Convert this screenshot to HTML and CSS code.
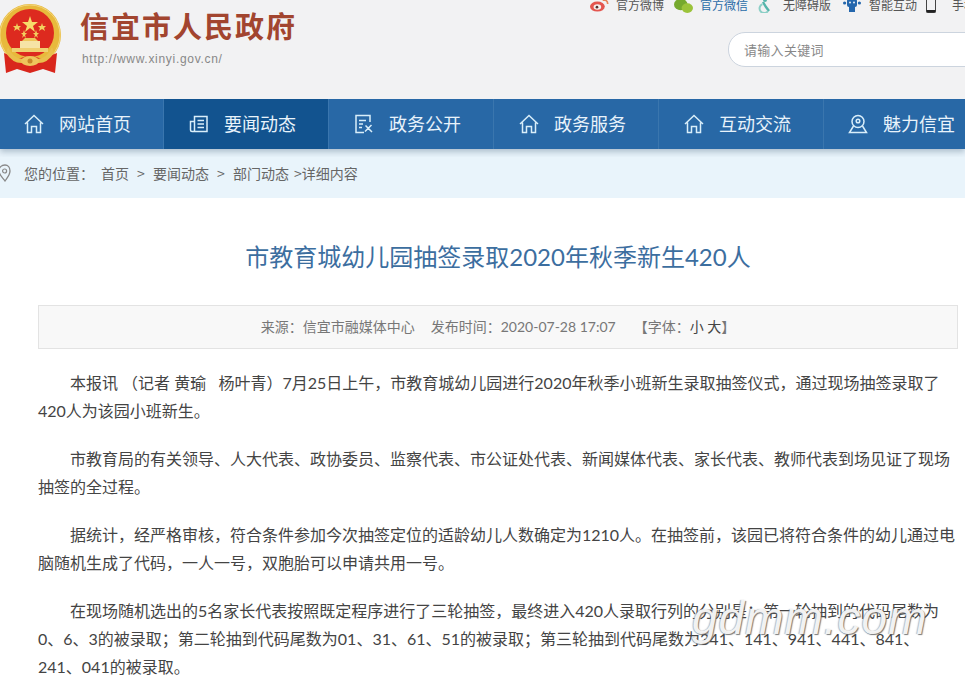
FILE: index.html
```html
<!DOCTYPE html>
<html lang="zh-CN">

<head>
  <meta charset="UTF-8">
  <meta name="viewport" content="width=device-width, initial-scale=1.0">
  <title>市教育城幼儿园抽签录取2020年秋季新生420人</title>
  <link rel="stylesheet" href="styles.css">
</head>

<body>
  <!-- 头部 -->
  <header class="head">
    <div class="brand">
      <svg class="emblem" width="64" height="72" viewBox="0 0 64 72">
        <circle cx="31" cy="32" r="31" fill="#e8b93c" />
        <circle cx="31" cy="32" r="30" fill="none" stroke="#f3d77a" stroke-width="1" />
        <circle cx="31" cy="30" r="24" fill="#dd2a1f" />
        <polygon points="31,13 33,19 39,19 34,23 36,29 31,25 26,29 28,23 23,19 29,19" fill="#f7dc6a" />
        <polygon points="18,20 19,23 22,23 20,25 21,28 18,26 15,28 16,25 14,23 17,23" fill="#f2cf5f" />
        <polygon points="43,20 44,23 47,23 45,25 46,28 43,26 40,28 41,25 39,23 42,23" fill="#f2cf5f" />
        <polygon points="25,27 26,30 28,30 26,32 27,35 25,33 23,35 24,32 22,30 24,30" fill="#f2cf5f" />
        <polygon points="37,27 38,30 40,30 38,32 39,35 37,33 35,35 36,32 34,30 36,30" fill="#f2cf5f" />
        <rect x="21" y="38" width="20" height="7" fill="#f6e4a6" />
        <polygon points="23,38 39,38 36,35 26,35" fill="#eec65c" />
        <rect x="13" y="45" width="36" height="4" fill="#f0cf70" />
        <path d="M5 50 L19 56 L31 52 L43 56 L58 50 L56 70 L44 66 L31 70 L18 66 L7 70 Z" fill="#d9261c" />
        <path d="M9 44 Q14 56 24 56 L38 56 Q48 56 53 44 L55 50 Q48 61 38 60 L24 60 Q14 61 7 50 Z" fill="#e9bf4c" />
        <ellipse cx="31" cy="58" rx="9" ry="5" fill="#eec65c" />
        <circle cx="31" cy="58" r="2.5" fill="#c9872a" />
      </svg>
      <div class="brand-text">
        <h1 class="site-name">信宜市人民政府</h1>
        <p class="site-url">http://www.xinyi.gov.cn/</p>
      </div>
    </div>

    <div class="head-right">
      <!-- 顶部链接 -->
      <div class="top-links">
        <a class="top-link link-weibo" href="#">
          <svg width="19" height="13" viewBox="0 0 18 12">
            <ellipse cx="7" cy="7" rx="7" ry="4.8" fill="#e4564f" />
            <ellipse cx="7" cy="7.4" rx="3.6" ry="2.6" fill="#f5f2f0" />
            <circle cx="6.6" cy="7.6" r="1.3" fill="#55302d" />
            <path d="M12 1 Q16.5 0 16.8 4.6" fill="none" stroke="#e8855a" stroke-width="1.6" />
          </svg>
          官方微博
        </a>
        <a class="top-link link-wechat link-blue" href="#">
          <svg width="19" height="15" viewBox="0 0 18 13">
            <ellipse cx="6.4" cy="4.6" rx="6.4" ry="5.4" fill="#76a92e" />
            <ellipse cx="12.6" cy="8" rx="5.4" ry="4.6" fill="#9bc33a" />
          </svg>
          官方微信
        </a>
        <a class="top-link link-access" href="#">
          <svg width="14" height="14" viewBox="0 0 14 14">
            <circle cx="7" cy="1" r="2" fill="#55b5ab" />
            <path d="M5 3 L8 8 L11 12" fill="none" stroke="#55b5ab" stroke-width="2.4" />
            <path d="M4.4 5.2 A4.6 4.6 0 1 0 10 12" fill="none" stroke="#8ccfc6" stroke-width="2" />
          </svg>
          无障碍版
        </a>
        <a class="top-link link-robot" href="#">
          <svg width="18" height="13" viewBox="0 0 18 13">
            <rect x="4" y="0" width="10" height="8" rx="2" fill="#2467ad" />
            <rect x="6" y="8" width="6" height="5" fill="#2467ad" />
            <circle cx="1.6" cy="4" r="1.6" fill="#2467ad" />
            <circle cx="16.4" cy="4" r="1.6" fill="#2467ad" />
            <circle cx="7" cy="3.4" r="1" fill="#e6eef6" />
            <circle cx="11" cy="3.4" r="1" fill="#e6eef6" />
          </svg>
          智能互动
        </a>
        <a class="top-link link-phone" href="#">
          <svg width="10" height="14" viewBox="0 0 10 14">
            <rect x="0.5" y="-4" width="9" height="17.5" rx="1" fill="none" stroke="#444" />
            <rect x="0.5" y="11" width="9" height="2.5" fill="#222" />
          </svg>
          手机版
        </a>
      </div>
      <div class="search-box">请输入关键词</div>
    </div>
  </header>

  <!-- 导航 -->
  <nav class="nav">
    <a class="nav-item first" href="#">
      <svg class="nav-icon" width="20" height="20" viewBox="0 0 20 20">
        <path d="M1 10 L10 1.5 L19 10 M3.5 8.5 V18.5 H7.5 V12.5 H12.5 V18.5 H16.5 V8.5" />
      </svg>
      网站首页
    </a>
    <a class="nav-item on" href="#">
      <svg class="nav-icon" width="20" height="20" viewBox="0 0 20 20">
        <path d="M5.5 2.5 H18 V17.5 H3 Q1.5 17.5 1.5 16 V7.5 H5.5 Z M5.5 7.5 V17 M8.5 6.5 H15 M8.5 10 H15 M8.5 13.5 H15" />
      </svg>
      要闻动态
    </a>
    <a class="nav-item" href="#">
      <svg class="nav-icon" width="20" height="20" viewBox="0 0 20 20">
        <path d="M10 18.5 H2 V1.5 H16 V8 M5 6.5 H12 M5 10 H9 M5 13.5 H8 M11 17.5 L17.5 11 M11.5 11.5 L18 18" />
      </svg>
      政务公开
    </a>
    <a class="nav-item" href="#">
      <svg class="nav-icon" width="20" height="20" viewBox="0 0 20 20">
        <path d="M1 10 L10 1.5 L19 10 M3.5 8.5 V18.5 H7.5 V12.5 H12.5 V18.5 H16.5 V8.5" />
      </svg>
      政务服务
    </a>
    <a class="nav-item" href="#">
      <svg class="nav-icon" width="20" height="20" viewBox="0 0 20 20">
        <path d="M1 10 L10 1.5 L19 10 M3.5 8.5 V18.5 H7.5 V12.5 H12.5 V18.5 H16.5 V8.5" />
      </svg>
      互动交流
    </a>
    <a class="nav-item last" href="#">
      <svg class="nav-icon" width="20" height="20" viewBox="0 0 20 20">
        <circle cx="10" cy="7.5" r="6" />
        <circle cx="10" cy="7" r="1.8" />
        <path d="M5.5 12 L1.5 18.5 H18.5 L14.5 12 M10 13.5 V13.5" />
      </svg>
      魅力信宜
    </a>
  </nav>

  <!-- 当前位置 -->
  <div class="crumb">
    <svg class="crumb-pin" width="11" height="18" viewBox="0 0 11 18">
      <path d="M5 1 C1.5 1 -1 3.5 -1 7 C-1 11 3 14 5 17 C7 14 10 11 10 7 C10 3.5 8 1 5 1 Z" fill="none" stroke="#888" stroke-width="1.3" />
      <circle cx="4.6" cy="7" r="2" fill="none" stroke="#888" stroke-width="1.2" />
    </svg>
    <span class="crumb-label">您的位置：</span>
    <a href="#">首页</a>
    <span class="crumb-sep">&gt;</span>
    <a href="#">要闻动态</a>
    <span class="crumb-sep">&gt;</span>
    <a href="#">部门动态</a>
    <span class="crumb-end">&gt;详细内容</span>
  </div>

  <!-- 正文 -->
  <main class="article">
    <h2 class="article-title">市教育城幼儿园抽签录取2020年秋季新生420人</h2>
    <div class="article-meta">来源：信宜市融媒体中心<span class="meta-gap"></span>发布时间：2020-07-28 17:07<span class="meta-gap wide"></span>【字体：<a href="#">小</a> <a href="#">大</a>】</div>
    <div class="article-body">
      <p>本报讯 （记者 黄瑜&nbsp;&nbsp;&nbsp;杨叶青）7月25日上午，市教育城幼儿园进行2020年秋季小班新生录取抽签仪式，通过现场抽签录取了420人为该园小班新生。</p>
      <p>市教育局的有关领导、人大代表、政协委员、监察代表、市公证处代表、新闻媒体代表、家长代表、教师代表到场见证了现场抽签的全过程。</p>
      <p>据统计，经严格审核，符合条件参加今次抽签定位的适龄幼儿人数确定为1210人。在抽签前，该园已将符合条件的幼儿通过电脑随机生成了代码，一人一号，双胞胎可以申请共用一号。</p>
      <p>在现场随机选出的5名家长代表按照既定程序进行了三轮抽签，最终进入420人录取行列的分别是：第一轮抽到的代码尾数为0、6、3的被录取；第二轮抽到代码尾数为01、31、61、51的被录取；第三轮抽到代码尾数为341、141、941、441、841、241、041的被录取。</p>
    </div>
  </main>

  <!-- 图片水印 -->
  <div class="watermark">gdmm.com</div>
</body>

</html>
```

FILE: styles.css
```css
* {
  margin: 0;
  padding: 0;
  box-sizing: border-box;
}

html,
body {
  height: 683px;
  overflow: hidden;
}

body {
  position: relative;
  background: #fff;
  font-family: "Noto Sans CJK SC", "Liberation Sans", sans-serif;
  color: #444;
}

a {
  color: inherit;
  text-decoration: none;
}

/* 头部 */
.head {
  display: flex;
  height: 99px;
  overflow: hidden;
  background: #f2f2f3;
}

.brand {
  display: flex;
  flex: 0 0 590px;
  align-items: flex-start;
  padding-top: 3px;
}

.emblem {
  flex: none;
  margin-left: -1px;
}

.brand-text {
  margin-left: 17px;
}

.site-name {
  margin-top: 2px;
  font-size: 29px;
  line-height: 40px;
  letter-spacing: 2px;
  font-weight: 700;
  color: #a2452f;
}

.site-url {
  margin-top: 6px;
  margin-left: 2px;
  font-family: "Liberation Sans", sans-serif;
  font-size: 12px;
  line-height: 16px;
  letter-spacing: 0.7px;
  color: #888;
}

.head-right {
  flex: none;
  width: 440px;
}

.top-links {
  display: flex;
  height: 35px;
  margin-top: -3px;
  white-space: nowrap;
}

.top-link {
  display: flex;
  align-items: flex-start;
  height: 16px;
  font-size: 12px;
  line-height: 16px;
  color: #555;
}

.top-link svg {
  flex: none;
  margin-top: 2px;
}

.link-blue {
  color: #2a6ca8;
}

.link-weibo {
  width: 84px;
}

.link-weibo svg,
.link-wechat svg {
  margin-right: 7px;
}

.link-robot svg {
  margin-right: 8px;
}

.link-wechat {
  width: 84px;
}

.link-access {
  width: 85px;
}

.link-access svg {
  margin-right: 11px;
}

.link-robot {
  width: 83px;
}

.link-phone svg {
  margin-right: 16px;
}

.search-box {
  width: 300px;
  height: 35px;
  margin-left: 138px;
  padding-left: 15px;
  border: 1px solid #ccd4de;
  border-radius: 17px 0 0 17px;
  background: #fff;
  font-size: 13px;
  letter-spacing: 0.3px;
  line-height: 33px;
  color: #888;
}

/* 导航 */
.nav {
  position: relative;
  z-index: 1;
  display: flex;
  height: 50px;
  overflow: hidden;
  background: #2868a6;
  box-shadow: 0 3px 6px rgba(40, 70, 100, 0.3);
  clip-path: inset(0 0 -8px 0);
}

.nav-item {
  display: flex;
  flex: 0 0 165px;
  align-items: center;
  padding-left: 25px;
  padding-bottom: 2px;
  border-right: 1px solid #3a76ae;
  font-size: 18px;
  color: #e8f3fb;
  white-space: nowrap;
}

.nav-item.first {
  flex-basis: 164px;
  padding-left: 24px;
}

.nav-item.on {
  background: #12538f;
}

.nav-item.last {
  padding-left: 24px;
}

.nav-icon {
  flex: none;
  margin-top: 2px;
  margin-right: 15px;
  fill: none;
  stroke: #d9eefa;
  stroke-width: 1.5;
}

/* 当前位置 */
.crumb {
  display: flex;
  align-items: center;
  height: 49px;
  padding-bottom: 2px;
  background: #e9f4fb;
  font-size: 14px;
  color: #666;
  white-space: nowrap;
}

.crumb-pin {
  flex: none;
  margin-right: 13px;
}

.crumb-label {
  width: 77px;
}

.crumb-sep {
  width: 24px;
  text-align: center;
}

.crumb-end {
  margin-left: 5px;
}

/* 正文 */
.article {
  width: 920px;
  margin-left: 38px;
  font-family: Lato, "Noto Sans CJK SC", sans-serif;
}

.article-title {
  margin-top: 41px;
  font-size: 24px;
  line-height: 36px;
  font-weight: 400;
  text-align: center;
  color: #3c6e9f;
}

.article-meta {
  height: 44px;
  margin-top: 30px;
  border: 1px solid #e3e3e3;
  background: #f8f8f8;
  font-size: 14px;
  line-height: 42px;
  text-align: center;
  color: #777;
}

.meta-gap {
  display: inline-block;
  width: 16px;
}

.meta-gap.wide {
  width: 18px;
}

.article-meta a {
  color: #444;
}

.article-body {
  padding: 20px 2px 0 0;
  font-size: 16px;
  line-height: 28px;
}

.article-body p {
  margin-bottom: 20px;
  text-indent: 2em;
}

/* 水印压在正文上 */
.watermark {
  position: absolute;
  left: 692px;
  top: 590px;
  font-family: "Liberation Sans", sans-serif;
  font-size: 46px;
  line-height: 56px;
  font-style: italic;
  letter-spacing: 1px;
  color: rgba(246, 246, 246, 0.97);
  text-shadow: 1px 1px 1px rgba(90, 90, 90, 0.8), -1px 0 1px rgba(120, 120, 120, 0.5);
}
```
